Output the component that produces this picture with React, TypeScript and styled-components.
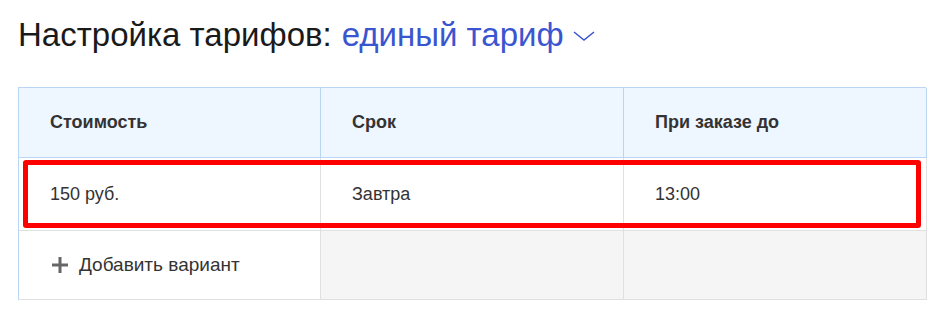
import React from 'react'
import styled, {createGlobalStyle} from 'styled-components'

const GlobalStyle = createGlobalStyle`
  html, body {
    margin: 0;
    padding: 0;
    background: #fff;
    font-family: "Liberation Sans", Arial, sans-serif;
  }
`

interface TariffRow {
  price: string
  term: string
  orderBefore: string
}

const rows: TariffRow[] = [{price: '150 руб.', term: 'Завтра', orderBefore: '13:00'}]

const ChevronDown: React.FC = () => (
  <svg width="22" height="10" viewBox="0 0 22 10" fill="none">
    <path d="M1 1 L11 9 L21 1" stroke="#3a55d0" strokeWidth="1.5" />
  </svg>
)

const PlusIcon: React.FC = () => (
  <svg width="16" height="16" viewBox="0 0 16 16">
    <path d="M8 0 V16 M0 8 H16" stroke="#666" strokeWidth="3" />
  </svg>
)

const App: React.FC = () => {
  return (
    <Page>
      <GlobalStyle />
      <Title>
        Настройка тарифов:
        <TariffPicker>
          единый тариф
          <ChevronDown />
        </TariffPicker>
      </Title>
      <Table>
        <HeadCell>Стоимость</HeadCell>
        <HeadCell>Срок</HeadCell>
        <HeadCell>При заказе до</HeadCell>
        {rows.map((row) => (
          <React.Fragment key={row.price}>
            <Cell>{row.price}</Cell>
            <Cell>{row.term}</Cell>
            <Cell>{row.orderBefore}</Cell>
          </React.Fragment>
        ))}
        <Cell>
          <AddButton>
            <PlusIcon />
            Добавить вариант
          </AddButton>
        </Cell>
        <Cell $muted />
        <Cell $muted />
        <Highlight />
      </Table>
    </Page>
  )
}

const Page = styled.div`
  padding: 15px 13px 0 18px;
`

const Title = styled.h1`
  margin: 0;
  display: flex;
  align-items: center;
  gap: 10px;
  font-size: 33px;
  font-weight: 400;
  color: #1a1a1a;
  line-height: 40px;
`

const TariffPicker = styled.span`
  display: inline-flex;
  align-items: center;
  gap: 9px;
  color: #3a55d0;
  cursor: pointer;
  svg {
    margin-top: 2px;
  }
`

const Table = styled.div`
  position: relative;
  margin-top: 32px;
  display: grid;
  grid-template-columns: 302px 303px 303px;
  grid-template-rows: 70px 73px 69px;
  border-left: 1px solid #b9d6f5;
  border-top: 1px solid #b9d6f5;
  width: 908px;
  box-sizing: border-box;
`

const HeadCell = styled.div`
  display: flex;
  align-items: center;
  padding-left: 31px;
  background: #eef6ff;
  border-right: 1px solid #b9d6f5;
  border-bottom: 1px solid #b9d6f5;
  font-size: 18px;
  font-weight: 700;
  color: #333;
`

const Cell = styled.div<{$muted?: boolean}>`
  display: flex;
  align-items: center;
  padding-left: 31px;
  background: ${(p) => (p.$muted ? '#f5f5f5' : '#fff')};
  border-right: 1px solid #e0e0e0;
  border-bottom: 1px solid #e0e0e0;
  font-size: 18px;
  color: #333;
`

const AddButton = styled.span`
  display: inline-flex;
  align-items: center;
  gap: 11px;
  cursor: pointer;
  color: #333;
  font-size: 19px;
  margin-left: 2px;
`

// red frame around the filled tariff row
const Highlight = styled.div`
  position: absolute;
  left: 4px;
  top: 72px;
  width: 898px;
  height: 68px;
  box-sizing: border-box;
  border: 5px solid #ff0000;
  border-radius: 3px;
  pointer-events: none;
`

export default App
